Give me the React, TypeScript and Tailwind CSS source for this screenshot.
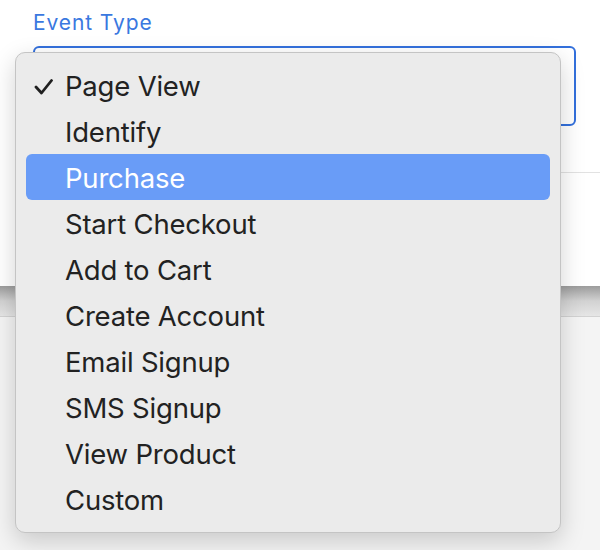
import React from "react";

const OPTIONS = [
  "Page View",
  "Identify",
  "Purchase",
  "Start Checkout",
  "Add to Cart",
  "Create Account",
  "Email Signup",
  "SMS Signup",
  "View Product",
  "Custom",
];

const SELECTED = "Page View";
const HOVERED = "Purchase";

function Check() {
  return (
    <svg width="20" height="16" viewBox="0 0 20 16" className="absolute left-[8px] top-[17px]">
      <path d="M2 8 L7.5 14 L17.5 1.5" fill="none" stroke="#1f1f1f" strokeWidth="2.8" strokeLinecap="round" strokeLinejoin="round" />
    </svg>
  );
}

export default function App() {
  return (
    <div className="relative w-[600px] h-[550px] overflow-hidden bg-white font-['Inter',sans-serif]">
      {/* form card */}
      <div className="h-[286px] flex flex-col bg-white">
        <div className="pl-[33px] pt-[9px]">
          <div className="text-[21px] leading-[28px] tracking-[0.9px] text-[#3a78e0]">Event Type</div>
          <div className="mt-[9px] w-[543px] h-[80px] rounded-[6px] border-2 border-[#3370dc]" />
        </div>
        <div className="mt-[46px] ml-[33px] border-t border-[#e2e2e2]" />
      </div>
      {/* gap between cards */}
      <div className="h-[30px] bg-gradient-to-b from-[#9c9c9c] via-[#d2d2d2] to-[#e6e6e6]" />
      <div className="h-full border-t border-[#d2d2d2] bg-[#f4f4f4]" />

      {/* native dropdown */}
      <div className="absolute left-[15px] top-[52px] w-[546px] h-[481px] rounded-[10px] bg-[#ebebeb] border border-[#c4c4c4] shadow-[0_8px_24px_rgba(0,0,0,0.18)] px-[10px] pt-[9px]">
        {OPTIONS.map((o) => (
          <div
            key={o}
            className={
              o === HOVERED
                ? "relative h-[46px] flex items-center pl-[39px] rounded-[6px] bg-[#699cf7] text-white text-[27.5px]"
                : "relative h-[46px] flex items-center pl-[39px] text-[#222222] text-[27.5px]"
            }
          >
            {o === SELECTED && <Check />}
            <span className="tracking-[-0.2px] translate-y-[2px]">{o}</span>
          </div>
        ))}
      </div>
    </div>
  );
}
